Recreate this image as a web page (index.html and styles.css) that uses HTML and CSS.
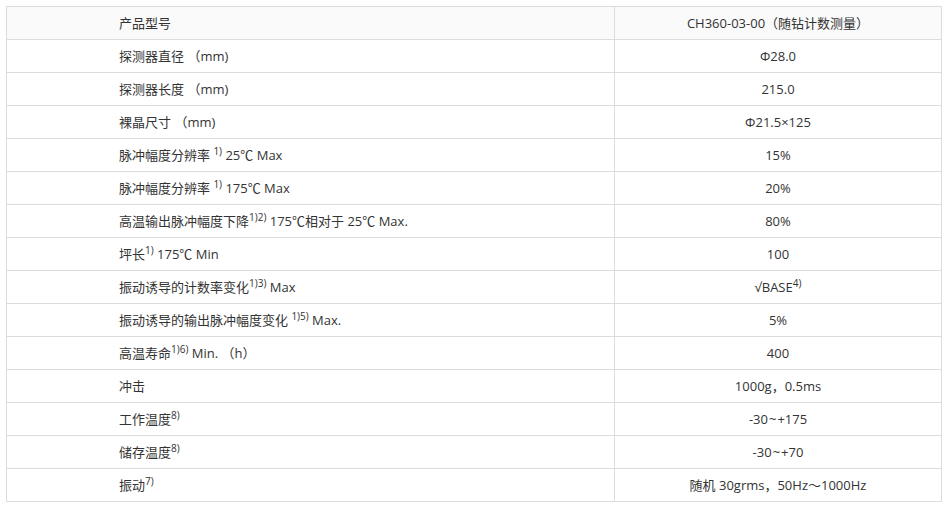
FILE: index.html
```html
<!DOCTYPE html>
<html lang="zh-CN">
<head>
<meta charset="utf-8">
<link rel="stylesheet" href="styles.css">
</head>
<body>
<table class="spec">
  <tr class="head"><td class="k">产品型号</td><td class="v">CH360-03-00（随钻计数测量）</td></tr>
  <tr><td class="k">探测器直径 （mm)</td><td class="v">Φ28.0</td></tr>
  <tr><td class="k">探测器长度 （mm)</td><td class="v">215.0</td></tr>
  <tr><td class="k">裸晶尺寸 （mm)</td><td class="v">Φ21.5×125</td></tr>
  <tr><td class="k">脉冲幅度分辨率 <sup>1)</sup> 25℃ Max</td><td class="v">15%</td></tr>
  <tr><td class="k">脉冲幅度分辨率 <sup>1)</sup> 175℃ Max</td><td class="v">20%</td></tr>
  <tr><td class="k">高温输出脉冲幅度下降<sup>1)2)</sup> 175℃相对于 25℃ Max.</td><td class="v">80%</td></tr>
  <tr><td class="k">坪长<sup>1)</sup> 175℃ Min</td><td class="v">100</td></tr>
  <tr><td class="k">振动诱导的计数率变化<sup>1)3)</sup> Max</td><td class="v">√BASE<sup>4)</sup></td></tr>
  <tr><td class="k">振动诱导的输出脉冲幅度变化 <sup>1)5)</sup> Max.</td><td class="v">5%</td></tr>
  <tr><td class="k">高温寿命<sup>1)6)</sup> Min. （h）</td><td class="v">400</td></tr>
  <tr><td class="k">冲击</td><td class="v">1000g，0.5ms</td></tr>
  <tr><td class="k">工作温度<sup>8)</sup></td><td class="v">-30<span class="tl">~</span>+175</td></tr>
  <tr><td class="k">储存温度<sup>8)</sup></td><td class="v">-30<span class="tl">~</span>+70</td></tr>
  <tr><td class="k">振动<sup>7)</sup></td><td class="v">随机 30grms，50Hz～1000Hz</td></tr>
</table>
</body>
</html>
```

FILE: styles.css
```css
html, body {
  margin: 0;
  padding: 0;
  background: #fff;
}
body {
  padding: 6px;
  font-family: "Open Sans", "Noto Sans CJK SC", sans-serif;
  font-size: 13px;
  color: #333;
}
.spec {
  border-collapse: collapse;
  width: 936px;
  table-layout: fixed;
}
.spec td {
  border: 1px solid #dcdcdc;
  height: 33px;
  padding: 0;
  box-sizing: border-box;
  vertical-align: middle;
  line-height: 20px;
  white-space: nowrap;
}
.spec .k {
  width: 608px;
  padding-left: 112px;
  text-align: left;
}
.spec .v {
  text-align: center;
}
.spec .head td {
  background: #fafafa;
}
.tl {
  margin: 0 1px;
}
sup {
  font-size: 10px;
  line-height: 0;
  vertical-align: 5px;
}
```
